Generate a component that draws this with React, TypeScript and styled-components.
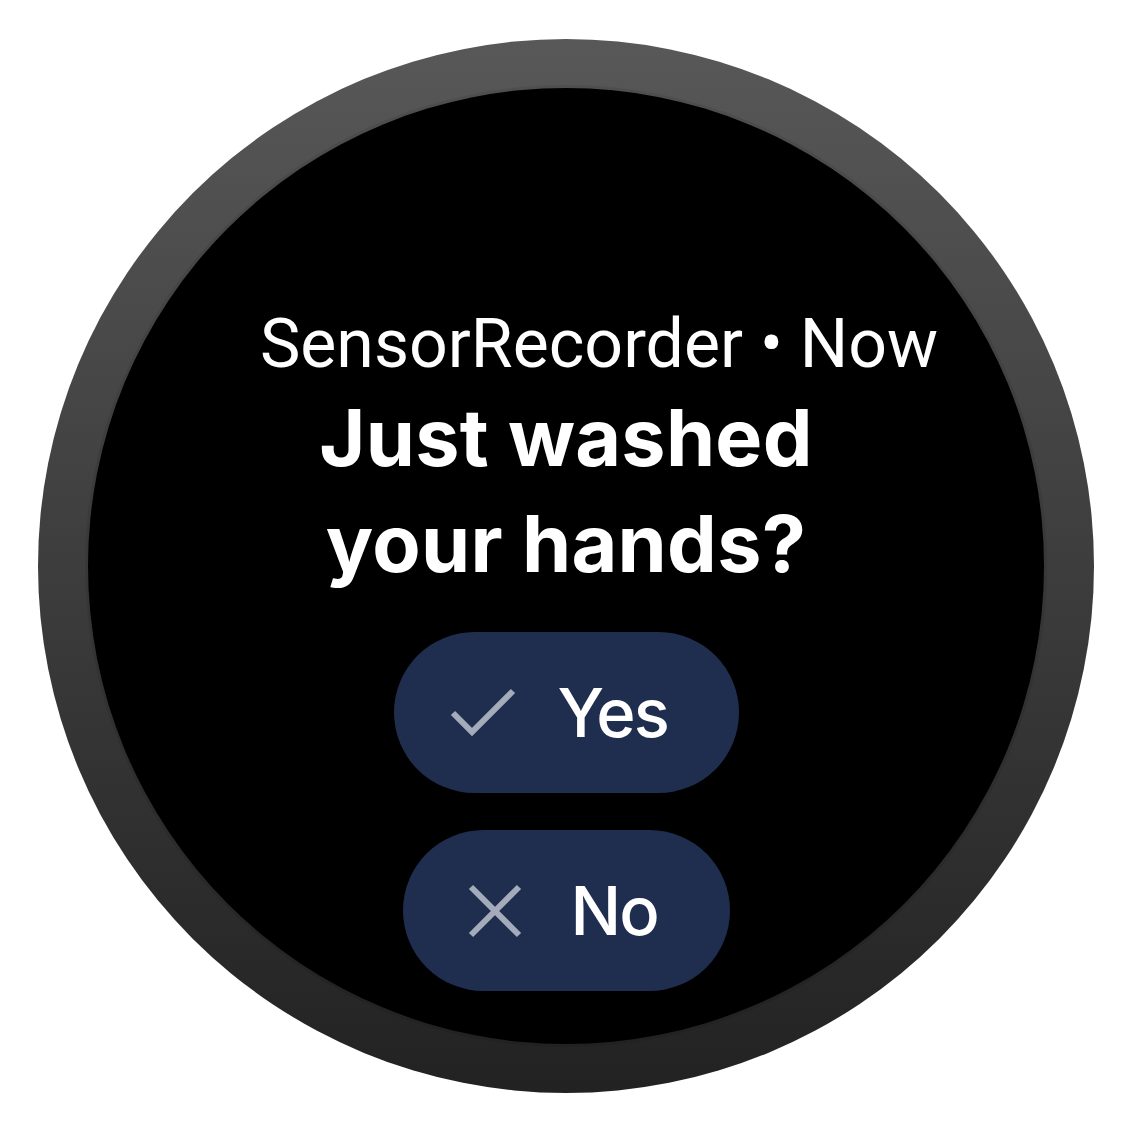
import React from "react";
import styled, { createGlobalStyle } from "styled-components";

const GlobalStyle = createGlobalStyle`
  html, body {
    margin: 0;
    padding: 0;
    background: #ffffff;
  }
`;

// fond blanc de la page, la montre posée dessus
const Page = styled.div`
  width: 1134px;
  height: 1136px;
  box-sizing: border-box;
  padding: 39px 0 0 38px;
`;

// la lunette grise autour de l'écran
const Bezel = styled.div`
  width: 1056px;
  height: 1054px;
  box-sizing: border-box;
  padding: 49px 50px;
  border-radius: 50%;
  background: linear-gradient(to bottom, #585858 0%, #3d3d3d 50%, #222222 100%);
  display: flex;
`;

// l'écran rond, tout noir
const Screen = styled.div`
  flex: 1;
  border-radius: 50%;
  background: #000000;
  box-shadow: 0 0 0 3px rgba(0, 0, 0, 0.08);
  display: flex;
  flex-direction: column;
  align-items: center;
  padding-top: 216px;
  box-sizing: border-box;
`;

const Header = styled.div`
  font-family: Roboto, "Liberation Sans", sans-serif;
  font-size: 68px;
  line-height: 80px;
  color: #ffffff;
  margin-left: 66px;
  white-space: nowrap;
`;

const Title = styled.h1`
  margin: 0;
  font-family: Inter, "Open Sans", sans-serif;
  font-weight: 700;
  font-size: 79px;
  line-height: 106px;
  color: #ffffff;
  text-align: center;
  letter-spacing: 0.3px;
`;

const Actions = styled.div`
  display: flex;
  flex-direction: column;
  align-items: center;
  gap: 37px;
  margin-top: 36px;
`;

// bouton pilule bleu foncé
const Chip = styled.button<{ $width: number; $padLeft: number; $gap: number }>`
  width: ${(p) => p.$width}px;
  height: 161px;
  border: none;
  border-radius: 81px;
  background: #1f2e4e;
  display: flex;
  align-items: center;
  gap: ${(p) => p.$gap}px;
  padding: 0 0 0 ${(p) => p.$padLeft}px;
  box-sizing: border-box;
  cursor: pointer;
`;

const ChipLabel = styled.span`
  font-family: Inter, "Open Sans", sans-serif;
  font-weight: 500;
  font-size: 67px;
  color: #ffffff;
  letter-spacing: -2px;
`;

const CheckIcon = () => (
  <svg width="66" height="50" viewBox="0 0 66 50">
    <polyline
      points="3,25 22,44 63,3"
      fill="none"
      stroke="#a4acbc"
      strokeWidth="6"
    />
  </svg>
);

const CloseIcon = () => (
  <svg width="54" height="54" viewBox="0 0 54 54">
    <path d="M3 3 L51 51 M51 3 L3 51" fill="none" stroke="#a4acbc" strokeWidth="6" />
  </svg>
);

export default function App() {
  return (
    <>
      <GlobalStyle />
      <Page>
        <Bezel>
          <Screen>
            <Header>SensorRecorder • Now</Header>
            <Title>
              Just washed
              <br />
              your hands?
            </Title>
            <Actions>
              <Chip $width={345} $padLeft={56} $gap={42}>
                <CheckIcon />
                <ChipLabel>Yes</ChipLabel>
              </Chip>
              <Chip $width={327} $padLeft={65} $gap={49}>
                <CloseIcon />
                <ChipLabel>No</ChipLabel>
              </Chip>
            </Actions>
          </Screen>
        </Bezel>
      </Page>
    </>
  );
}
